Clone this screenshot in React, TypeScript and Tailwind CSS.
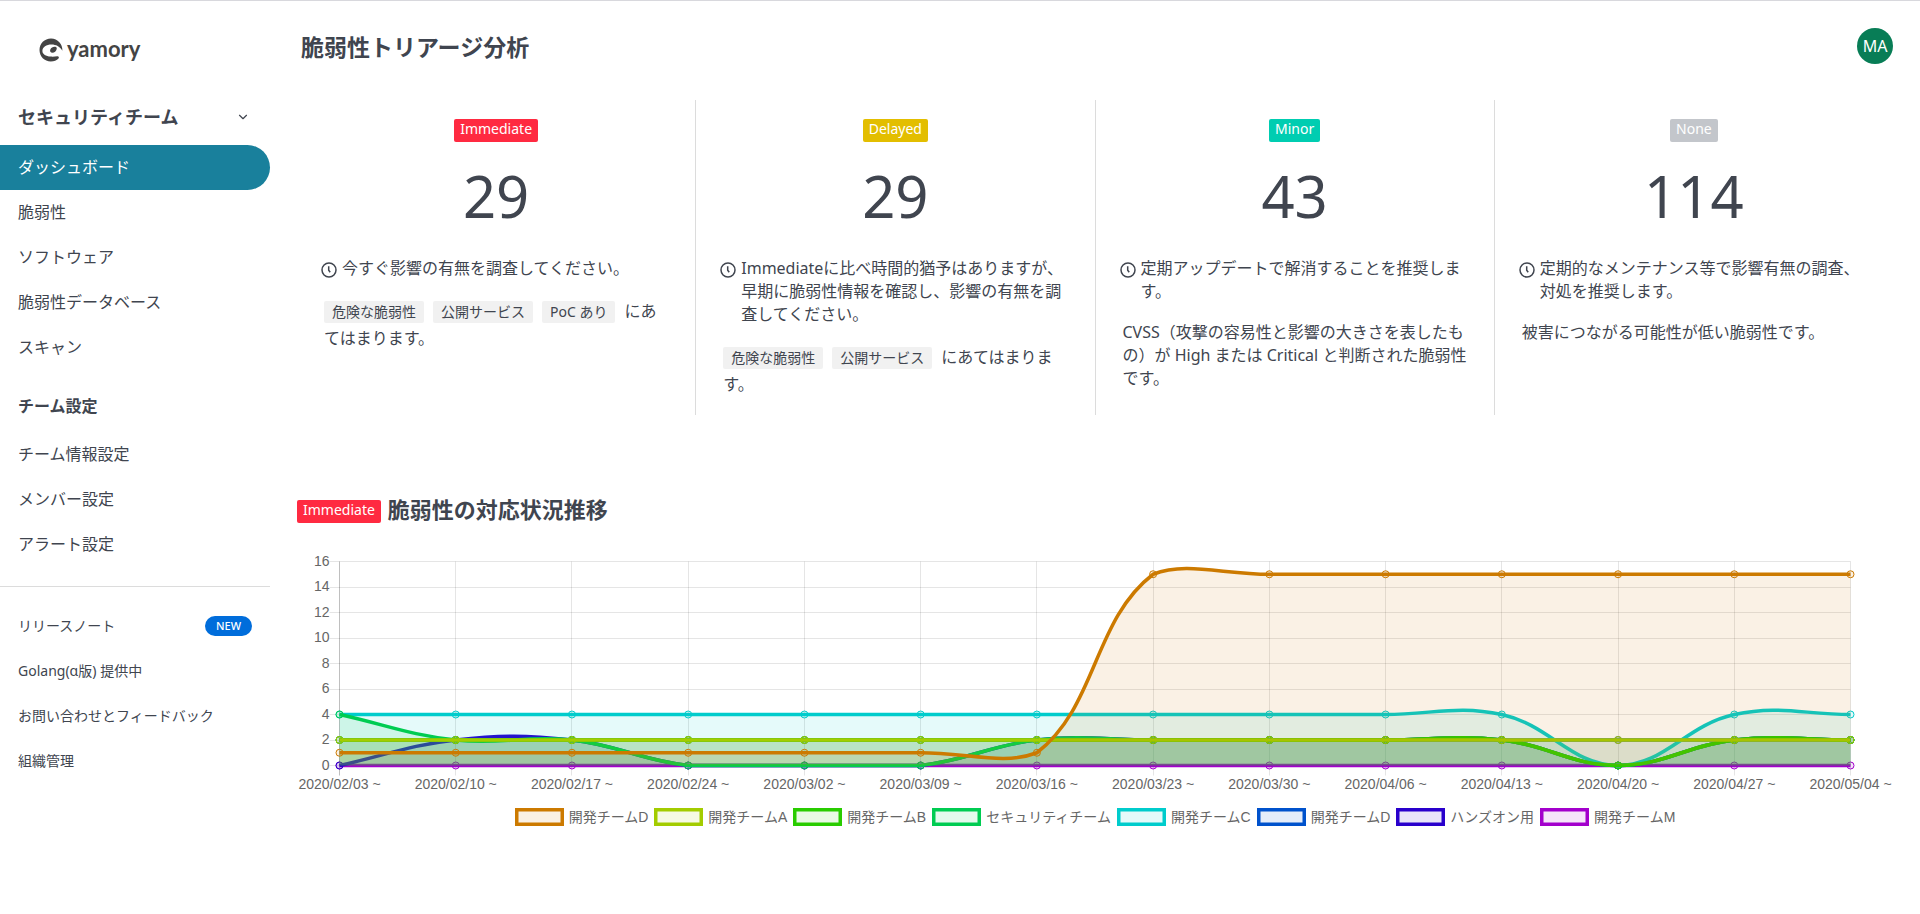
import type { ReactNode } from "react";
import { ChevronDown } from "lucide-react";

type Series = {
  name: string;
  color: string;
  values: number[];
};

const MAIN_MENU = ["ダッシュボード", "脆弱性", "ソフトウェア", "脆弱性データベース", "スキャン"];
const TEAM_MENU = ["チーム情報設定", "メンバー設定", "アラート設定"];
const SUB_MENU = [
  { label: "リリースノート", isNew: true },
  { label: "Golang(α版) 提供中", isNew: false },
  { label: "お問い合わせとフィードバック", isNew: false },
  { label: "組織管理", isNew: false },
];

const BADGE_COLOR: Record<string, string> = {
  Immediate: "bg-[#ff2a41]",
  Delayed: "bg-[#e3be00]",
  Minor: "bg-[#00cdb1]",
  None: "bg-[#c3c6cb]",
};

const WEEKS = [
  "2020/02/03", "2020/02/10", "2020/02/17", "2020/02/24", "2020/03/02", "2020/03/09", "2020/03/16",
  "2020/03/23", "2020/03/30", "2020/04/06", "2020/04/13", "2020/04/20", "2020/04/27", "2020/05/04",
];

const SERIES: Series[] = [
  { name: "開発チームD", color: "#cc7a00", values: [1, 1, 1, 1, 1, 1, 1, 15, 15, 15, 15, 15, 15, 15] },
  { name: "開発チームA", color: "#a3cc00", values: [2, 2, 2, 2, 2, 2, 2, 2, 2, 2, 2, 2, 2, 2] },
  { name: "開発チームB", color: "#29cc00", values: [2, 2, 2, 2, 2, 2, 2, 2, 2, 2, 2, 0, 2, 2] },
  { name: "セキュリティチーム", color: "#00cc52", values: [4, 2, 2, 0, 0, 0, 2, 2, 2, 2, 2, 0, 2, 2] },
  { name: "開発チームC", color: "#00cccc", values: [4, 4, 4, 4, 4, 4, 4, 4, 4, 4, 4, 0, 4, 4] },
  { name: "開発チームD", color: "#0052cc", values: [2, 2, 2, 2, 2, 2, 2, 2, 2, 2, 2, 2, 2, 2] },
  { name: "ハンズオン用", color: "#2900cc", values: [0, 2, 2, 0, 0, 0, 2, 2, 2, 2, 2, 0, 2, 2] },
  { name: "開発チームM", color: "#a300cc", values: [0, 0, 0, 0, 0, 0, 0, 0, 0, 0, 0, 0, 0, 0] },
];

const LEFT = 42.5;
const RIGHT = 1553.5;
const TOP = 14.5;
const BOTTOM = 218.5;
const TENSION = 0.4;

const px = (i: number) => LEFT + ((RIGHT - LEFT) * i) / (WEEKS.length - 1);
const py = (v: number) => BOTTOM - ((BOTTOM - TOP) * v) / 16;
const clampY = (y: number) => Math.min(BOTTOM, Math.max(TOP, y));

// cardinal-like spline, control points kept inside the plot area
function linePath(values: number[]) {
  const pts = values.map((v, i) => ({ x: px(i), y: py(v) }));
  const ctrl = pts.map((p, i) => {
    const prev = pts[i - 1] ?? p;
    const next = pts[i + 1] ?? p;
    const d01 = Math.hypot(p.x - prev.x, p.y - prev.y);
    const d12 = Math.hypot(next.x - p.x, next.y - p.y);
    const fa = (TENSION * d01) / (d01 + d12);
    const fb = (TENSION * d12) / (d01 + d12);
    return {
      inX: p.x - fa * (next.x - prev.x),
      inY: clampY(p.y - fa * (next.y - prev.y)),
      outX: p.x + fb * (next.x - prev.x),
      outY: clampY(p.y + fb * (next.y - prev.y)),
    };
  });
  let d = `M${pts[0].x} ${pts[0].y}`;
  for (let i = 1; i < pts.length; i++) {
    const a = ctrl[i - 1];
    const b = ctrl[i];
    d += ` C${a.outX} ${a.outY} ${b.inX} ${b.inY} ${pts[i].x} ${pts[i].y}`;
  }
  return d;
}

function Logo() {
  return (
    <a href="#" className="flex items-start gap-1 text-[#444]">
      <svg width="24" height="24" viewBox="0 0 24 24" fill="currentColor" aria-hidden="true">
        <path d="M12 .5C5.500.5.500 5.500.5 12c0 6.500 4.900 11.500 11.300 11.500 3.200 0 6-1.200 7.700-3 .9-1 .2-2.600-1.300-2.300-1.900.4-4.300.6-6.700.400C7 18.200 3.400 16.300 3.400 13c0-3.900 4-6.500 9.100-6.500 4.500 0 8.400 2 10.900 6.300C23.700 6.200 18.800.5 12 .5z" />
        <path d="M11.300 11.400c.8-1.900 3-3 4.900-2.700 1.300.2 1.800 1 1.500 2.200-.5 2.200-2.200 3.900-4.300 3.900-1.900 0-2.800-1.600-2.100-3.400z" />
      </svg>
      <span className="font-[Lato,'Noto_Sans',sans-serif] text-[22px] leading-[22px] font-bold">yamory</span>
    </a>
  );
}

function Badge({ level }: { level: string }) {
  return (
    <span className={`inline-block h-[23px] rounded-xs px-[6px] text-sm leading-5 font-normal text-white ${BADGE_COLOR[level]}`}>
      {level}
    </span>
  );
}

function Tag({ children }: { children: ReactNode }) {
  return (
    <span className="mr-[9px] inline-block rounded-xs bg-[#f1f1f1] px-2 text-sm leading-[22px]">{children}</span>
  );
}

function ClockIcon() {
  return (
    <svg className="mt-[5px] shrink-0" width="16" height="16" viewBox="0 0 16 16" fill="none" stroke="currentColor" strokeWidth="1.500" aria-hidden="true">
      <circle cx="8" cy="8" r="7" />
      <path d="M7.700 4.200v4l1.500 2" />
    </svg>
  );
}

function TriageCard({ level, count, action, children }: { level: string; count: number; action: string; children: ReactNode }) {
  return (
    <section className="flex-1 border-r border-[#dcdcdc] px-6 pt-[19px] pb-4 last:border-r-0">
      <div className="flex justify-center">
        <Badge level={level} />
      </div>
      <p className="mt-[14px] mb-[21px] text-center text-[58px] leading-[80px]">{count}</p>
      <p className="flex gap-[5px] leading-[23px]">
        <ClockIcon />
        <span>{action}</span>
      </p>
      <div className="mt-[18px] pl-[3px] leading-[23px]">{children}</div>
    </section>
  );
}

function Sidebar() {
  return (
    <aside className="w-[270px] shrink-0 pt-[37px]">
      <div className="pl-[39px]">
        <Logo />
      </div>
      <button className="mt-[33px] flex h-[45px] w-full items-center justify-between pr-5 pb-[2px] pl-[18px] text-lg font-bold">
        セキュリティチーム
        <ChevronDown size={14} />
      </button>
      <nav className="mt-[5px]">
        {MAIN_MENU.map((label, i) => (
          <a
            key={label}
            href="#"
            className={`flex h-[45px] items-center pb-[2px] pl-[18px] ${i === 0 ? "rounded-r-full bg-[#19809c] text-white" : ""}`}
          >
            {label}
          </a>
        ))}
      </nav>
      <h2 className="mt-[14px] flex h-[45px] items-center pb-[2px] pl-[18px] font-bold">チーム設定</h2>
      <nav className="mt-[3px]">
        {TEAM_MENU.map((label) => (
          <a key={label} href="#" className="flex h-[45px] items-center pb-[2px] pl-[18px]">
            {label}
          </a>
        ))}
      </nav>
      <hr className="mt-[19px] border-[#dcdcdc]" />
      <nav className="mt-4">
        {SUB_MENU.map((item) => (
          <a key={item.label} href="#" className="flex h-[45px] items-center justify-between pr-[18px] pl-[18px] text-sm">
            {item.label}
            {item.isNew && (
              <span className="rounded-full bg-[#006ddb] px-[11px] text-[11px] leading-5 font-medium text-white">NEW</span>
            )}
          </a>
        ))}
      </nav>
    </aside>
  );
}

function TrendChart() {
  return (
    <figure className="mt-6">
      <svg
        className="block w-full overflow-visible font-['Liberation_Sans',sans-serif]"
        viewBox="0 0 1596 250"
        role="img"
        aria-label="脆弱性の対応状況推移"
      >
        <g stroke="#000" strokeOpacity="0.1">
          {[0, 2, 4, 6, 8, 10, 12, 14, 16].map((v) => (
            <line key={v} x1={LEFT - 10} x2={RIGHT} y1={Math.floor(py(v)) + 0.5} y2={Math.floor(py(v)) + 0.5} />
          ))}
          {WEEKS.map((w, i) => (
            <line key={w} x1={Math.floor(px(i)) + 0.5} x2={Math.floor(px(i)) + 0.5} y1={TOP} y2={BOTTOM + 10} strokeOpacity={i === 0 ? 0.25 : 0.1} />
          ))}
        </g>
        <g fill="#666" fontSize="14">
          {[0, 2, 4, 6, 8, 10, 12, 14, 16].map((v) => (
            <text key={v} x={LEFT - 10} y={py(v) + 4} textAnchor="end">
              {v}
            </text>
          ))}
          {WEEKS.map((w, i) => (
            <text key={w} x={px(i)} y="242" textAnchor="middle">
              {w} ~
            </text>
          ))}
        </g>
        {[...SERIES].reverse().map((s) => {
          const d = linePath(s.values);
          return (
            <g key={s.color}>
              <path d={`${d} L${RIGHT} ${BOTTOM} L${LEFT} ${BOTTOM} Z`} fill={s.color} fillOpacity="0.1" />
              <path d={d} fill="none" stroke={s.color} strokeWidth="3.500" />
              {s.values.map((v, i) => (
                <circle key={WEEKS[i]} cx={px(i)} cy={py(v)} r="3.500" fill={s.color} fillOpacity="0.1" stroke={s.color} />
              ))}
            </g>
          );
        })}
      </svg>
      <figcaption className="mt-[10px] flex flex-wrap justify-center gap-x-[6px] text-sm leading-5 text-[#666]">
        {SERIES.map((s) => (
          <span key={s.color} className="flex items-center gap-[5px] font-['Liberation_Sans','Noto_Sans_CJK_JP',sans-serif]">
            <svg width="49" height="18" viewBox="0 0 49 18" aria-hidden="true">
              <rect x="1.750" y="1.750" width="45.500" height="14.500" fill={s.color} fillOpacity="0.1" stroke={s.color} strokeWidth="3.500" />
            </svg>
            {s.name}
          </span>
        ))}
      </figcaption>
    </figure>
  );
}

export default function App() {
  return (
    <div lang="ja" className="flex min-h-screen border-t border-[#d8d8dd] bg-white font-['Noto_Sans','Noto_Sans_CJK_JP',sans-serif] text-base text-[#40454f]">
      <Sidebar />
      <main className="min-w-0 flex-1 px-[27px]">
        <header className="flex items-center justify-between pt-[27px] pl-1">
          <h1 className="pt-[2px] text-[23px] leading-[34px] font-bold">脆弱性トリアージ分析</h1>
          <button className="h-9 w-9 rounded-full bg-[#087d56] text-base leading-9 text-white">MA</button>
        </header>

        <div className="mt-9 flex min-h-[315px]">
          <TriageCard level="Immediate" count={29} action="今すぐ影響の有無を調査してください。">
            <p className="leading-[27px]">
              <Tag>危険な脆弱性</Tag>
              <Tag>公開サービス</Tag>
              <Tag>PoC あり</Tag>
              にあてはまります。
            </p>
          </TriageCard>
          <TriageCard
            level="Delayed"
            count={29}
            action="Immediateに比べ時間的猶予はありますが、早期に脆弱性情報を確認し、影響の有無を調査してください。"
          >
            <p className="leading-[27px]">
              <Tag>危険な脆弱性</Tag>
              <Tag>公開サービス</Tag>
              にあてはまります。
            </p>
          </TriageCard>
          <TriageCard level="Minor" count={43} action="定期アップデートで解消することを推奨します。">
            <p>CVSS（攻撃の容易性と影響の大きさを表したもの）が High または Critical と判断された脆弱性です。</p>
          </TriageCard>
          <TriageCard level="None" count={114} action="定期的なメンテナンス等で影響有無の調査、対処を推奨します。">
            <p>被害につながる可能性が低い脆弱性です。</p>
          </TriageCard>
        </div>

        <section className="mt-20">
          <h2 className="flex items-end gap-[7px]">
            <Badge level="Immediate" />
            <span className="text-[22px] leading-7 font-bold">脆弱性の対応状況推移</span>
          </h2>
          <TrendChart />
        </section>
      </main>
    </div>
  );
}
